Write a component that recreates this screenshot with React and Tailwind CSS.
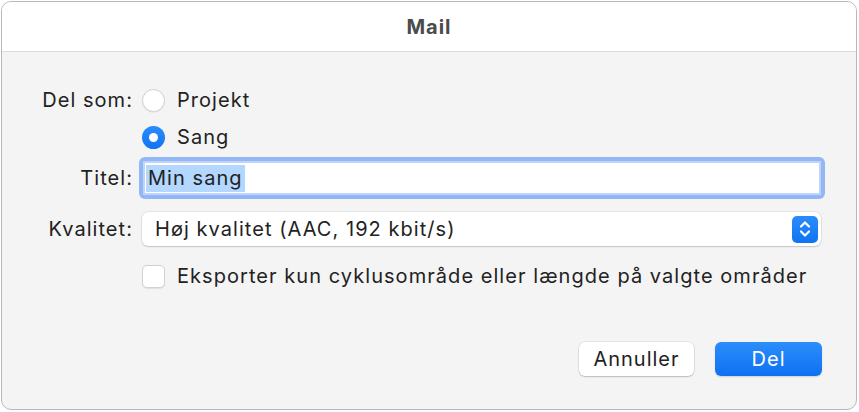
const font = { fontFamily: 'Inter, "Liberation Sans", sans-serif' };

const Radio = ({ checked }) =>
    checked ? (
        <span className="flex h-[23px] w-[23px] shrink-0 items-center justify-center rounded-full bg-gradient-to-b from-[#2a8cfb] to-[#0f74f3]">
            <span className="h-[9px] w-[9px] rounded-full bg-white" />
        </span>
    ) : (
        <span className="h-[23px] w-[23px] shrink-0 rounded-full border border-[#d2d2d2] bg-white shadow-[0_0.5px_1px_rgba(0,0,0,0.08)]" />
    );

const Row = ({ label, className = '', children }) => (
    <div className={`flex items-center ${className}`}>
        <span className="w-[131px] shrink-0 text-right">{label}</span>
        <div className="ml-[9px] flex min-w-0 flex-1 items-center">{children}</div>
    </div>
);

export default function App() {
    return (
        <div className="h-[412px] w-[859px] bg-white p-px" style={font}>
            <div className="flex h-[409px] w-[856px] flex-col overflow-hidden rounded-[10px] border border-[#b9b9b9] bg-[#f4f4f4] text-[20px] leading-[28px] tracking-[1.05px] text-[#222]">
                {/* Title bar */}
                <div className="flex h-[50px] shrink-0 items-center justify-center border-b border-[#dcdcdc] bg-white pt-[1px]">
                    <span className="font-bold tracking-[1px] text-[#4b4b4b]">Mail</span>
                </div>

                {/* Form */}
                <div className="flex flex-col pr-[35px] pt-[34px]">
                    <Row label="Del som:" className="h-[28px]">
                        <label className="flex items-center gap-[12px]">
                            <Radio />
                            <span>Projekt</span>
                        </label>
                    </Row>

                    <Row className="mt-[9px] h-[28px]">
                        <label className="flex items-center gap-[12px]">
                            <Radio checked />
                            <span>Sang</span>
                        </label>
                    </Row>

                    <Row label="Titel:" className="mt-[6px] h-[42px]">
                        <div className="ml-[-3px] mr-[-4px] h-[42px] flex-1 rounded-[6px] bg-[#93b7f6] p-[4px]">
                            <div className="flex h-full items-center border-2 border-[#bfd4f8] bg-white pl-[1px]">
                                <span className="bg-[#b3d7ff] px-[2px] leading-[27px]">Min sang</span>
                            </div>
                        </div>
                    </Row>

                    <Row label="Kvalitet:" className="mt-[13px] h-[34px]">
                        <div className="flex h-[34px] flex-1 items-center justify-between rounded-[6px] bg-white pl-[13px] pr-[3px] shadow-[0_0_0_0.5px_rgba(0,0,0,0.12),0_1px_1.5px_rgba(0,0,0,0.15)]">
                            <span>Høj kvalitet (AAC, 192 kbit/s)</span>
                            <span className="flex h-[27px] w-[26px] items-center justify-center rounded-[5px] bg-gradient-to-b from-[#2a8cfb] to-[#0f74f3]">
                                <svg width="14" height="20" viewBox="0 0 14 20" fill="none" stroke="white" strokeWidth="2.2" strokeLinecap="round" strokeLinejoin="round">
                                    <path d="M3 7.5 L7 3.5 L11 7.5" />
                                    <path d="M3 12.5 L7 16.5 L11 12.5" />
                                </svg>
                            </span>
                        </div>
                    </Row>

                    <Row className="mt-[16px] h-[28px]">
                        <label className="flex items-center gap-[12px] whitespace-nowrap">
                            <span className="h-[23px] w-[23px] shrink-0 rounded-[5px] border border-[#d2d2d2] bg-white shadow-[0_0.5px_1px_rgba(0,0,0,0.08)]" />
                            <span>Eksporter kun cyklusområde eller længde på valgte områder</span>
                        </label>
                    </Row>
                </div>

                {/* Buttons */}
                <div className="mt-[52px] flex justify-end gap-[21px] pr-[34px]">
                    <button className="h-[34px] w-[115px] rounded-[6px] bg-white tracking-[1px] text-[#222] shadow-[0_0_0_0.5px_rgba(0,0,0,0.12),0_1px_1.5px_rgba(0,0,0,0.18)]">
                        Annuller
                    </button>
                    <button className="h-[34px] w-[107px] rounded-[6px] bg-gradient-to-b from-[#2c8dfb] to-[#0b71f3] tracking-[1px] text-white shadow-[0_1px_1.5px_rgba(0,0,0,0.15)]">
                        Del
                    </button>
                </div>
            </div>
        </div>
    );
}
